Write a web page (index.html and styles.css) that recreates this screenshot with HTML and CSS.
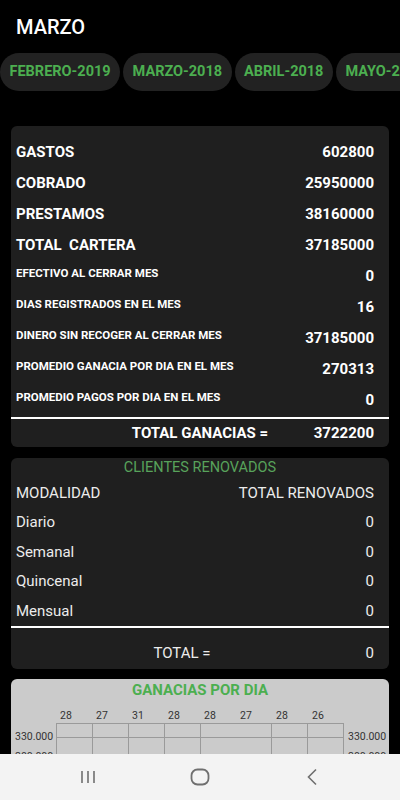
FILE: index.html
```html
<!DOCTYPE html>
<html lang="es">
<head>
<meta charset="UTF-8">
<meta name="viewport" content="width=device-width, initial-scale=1.0">
<title>Marzo</title>
<link rel="stylesheet" href="styles.css">
</head>
<body>
<header class="app-bar">
  <h1>MARZO</h1>
</header>

<div class="months">
  <span class="chip">FEBRERO-2019</span>
  <span class="chip">MARZO-2018</span>
  <span class="chip">ABRIL-2018</span>
  <span class="chip">MAYO-2018</span>
</div>

<section class="card summary">
  <div class="row"><span>GASTOS</span><span>602800</span></div>
  <div class="row"><span>COBRADO</span><span>25950000</span></div>
  <div class="row"><span>PRESTAMOS</span><span>38160000</span></div>
  <div class="row"><span>TOTAL&nbsp; CARTERA</span><span>37185000</span></div>
  <div class="row small"><span class="label">EFECTIVO AL CERRAR MES</span><span>0</span></div>
  <div class="row small"><span class="label">DIAS REGISTRADOS EN EL MES</span><span>16</span></div>
  <div class="row small"><span class="label">DINERO SIN RECOGER AL CERRAR MES</span><span>37185000</span></div>
  <div class="row small"><span class="label">PROMEDIO GANACIA POR DIA EN EL MES</span><span>270313</span></div>
  <div class="row small"><span class="label">PROMEDIO PAGOS POR DIA EN EL MES</span><span>0</span></div>
  <div class="divider"></div>
  <div class="total-row">
    <span></span>
    <span>TOTAL GANACIAS =</span>
    <span class="value">3722200</span>
  </div>
</section>

<section class="card renewed">
  <h2>CLIENTES RENOVADOS</h2>
  <div class="row"><span>MODALIDAD</span><span>TOTAL RENOVADOS</span></div>
  <div class="row"><span>Diario</span><span>0</span></div>
  <div class="row"><span>Semanal</span><span>0</span></div>
  <div class="row"><span>Quincenal</span><span>0</span></div>
  <div class="row"><span>Mensual</span><span>0</span></div>
  <div class="divider"></div>
  <div class="row renewed-total"><span class="label">TOTAL =</span><span class="value">0</span></div>
</section>

<section class="card chart">
  <h2>GANACIAS POR DIA</h2>
  <svg class="chart-grid" width="378" height="100" viewBox="0 0 378 100">
    <g stroke="#9a9a9a" stroke-width="1">
      <line x1="45" y1="22.5" x2="332" y2="22.5"/>
      <line x1="45" y1="36.5" x2="332" y2="36.5"/>
      <line x1="45" y1="56.5" x2="332" y2="56.5"/>
      <line x1="45" y1="76.5" x2="332" y2="76.5"/>
      <line x1="45.5" y1="22" x2="45.5" y2="100"/>
      <line x1="81.5" y1="22" x2="81.5" y2="100"/>
      <line x1="117.5" y1="22" x2="117.5" y2="100"/>
      <line x1="153.5" y1="22" x2="153.5" y2="100"/>
      <line x1="189.5" y1="22" x2="189.5" y2="100"/>
      <line x1="260.5" y1="22" x2="260.5" y2="100"/>
      <line x1="296.5" y1="22" x2="296.5" y2="100"/>
      <line x1="332.5" y1="22" x2="332.5" y2="100"/>
    </g>
    <g class="axis-text">
      <text x="49" y="18">28</text>
      <text x="85" y="18">27</text>
      <text x="121" y="18">31</text>
      <text x="157" y="18">28</text>
      <text x="193" y="18">28</text>
      <text x="229" y="18">27</text>
      <text x="265" y="18">28</text>
      <text x="301" y="18">26</text>
      <text x="4" y="39">330.000</text>
      <text x="337" y="39">330.000</text>
      <text x="4" y="59">300.000</text>
      <text x="337" y="59">300.000</text>
    </g>
  </svg>
</section>

<nav class="system-nav">
  <svg width="16" height="16" viewBox="0 0 16 16">
    <g stroke="#6f6f6f" stroke-width="1.6">
      <line x1="2" y1="2" x2="2" y2="14"/>
      <line x1="8" y1="2" x2="8" y2="14"/>
      <line x1="14" y1="2" x2="14" y2="14"/>
    </g>
  </svg>
  <svg width="20" height="18" viewBox="0 0 20 18">
    <rect x="1.5" y="1.5" width="17" height="15" rx="6" fill="none" stroke="#6f6f6f" stroke-width="1.8"/>
  </svg>
  <svg width="12" height="18" viewBox="0 0 12 18">
    <polyline points="10,1.5 2.5,9 10,16.5" fill="none" stroke="#6f6f6f" stroke-width="1.6"/>
  </svg>
</nav>
</body>
</html>
```

FILE: styles.css
```css
body {
  margin: 0;
  height: 800px;
  overflow: hidden;
  background-color: #000;
  color: #fff;
  font-family: Roboto, "Noto Sans", sans-serif;
}
.app-bar h1 {
  margin: 0;
  padding: 2px 16px 0;
  height: 51px;
  font-size: 20px;
  font-weight: 500;
  line-height: 51px;
}
.months {
  display: flex;
  gap: 3px;
  overflow: hidden;
  margin-bottom: 35px;
}
.chip {
  flex: none;
  height: 38px;
  line-height: 38px;
  padding: 0 9.5px;
  border-radius: 19px;
  background-color: #222;
  color: #4caf50;
  font-size: 14.5px;
  font-weight: 700;
  white-space: nowrap;
}
.card {
  margin: 0 11px;
  background-color: #1f1f1f;
  border-radius: 6px;
}
.row {
  display: flex;
  justify-content: space-between;
  align-items: center;
  padding: 0 15px 0 5px;
  white-space: nowrap;
}
.divider {
  height: 2px;
  background-color: #fff;
}

/* Resumen del mes */
.summary {
  padding-top: 10px;
}
.summary .row {
  height: 31px;
  font-size: 15px;
  font-weight: 700;
}
.summary .row.small .label {
  font-size: 11.5px;
  padding-bottom: 6px;
}
.summary .divider {
  margin-top: 2px;
}
.total-row {
  display: grid;
  grid-template-columns: 1fr auto 1fr;
  align-items: center;
  height: 28px;
  font-size: 15px;
  font-weight: 700;
}
.total-row .value {
  padding-right: 15px;
  text-align: right;
}

/* Clientes renovados */
.renewed {
  margin-top: 11px;
  padding-bottom: 1px;
}
.renewed h2,
.chart h2 {
  margin: 0;
  text-align: center;
  font-size: 14.5px;
}
.renewed h2 {
  line-height: 20px;
  font-weight: 400;
  color: #58a35b;
}
.renewed .row {
  height: 29.5px;
  font-size: 15px;
  color: #ececec;
}
.renewed-total {
  margin-top: 11px;
}
.renewed-total .label {
  flex: 1;
  text-align: center;
}
.renewed-total .value {
  min-width: 26px;
  text-align: right;
}

/* Grafica */
.chart {
  margin-top: 10px;
  height: 140px;
  background-color: #cbcbcb;
  border-radius: 6px 6px 0 0;
}
.chart h2 {
  line-height: 22px;
  font-size: 15px;
  font-weight: 700;
  color: #4caf50;
}
.chart-grid {
  display: block;
}
.axis-text text {
  font-family: Roboto, sans-serif;
  font-size: 10.5px;
  fill: #333;
}

.system-nav {
  position: fixed;
  left: 0;
  right: 0;
  bottom: 0;
  height: 46px;
  display: grid;
  grid-template-columns: repeat(3, 112px);
  justify-content: center;
  justify-items: center;
  align-items: center;
  background-color: #f3f3f3;
}
```
